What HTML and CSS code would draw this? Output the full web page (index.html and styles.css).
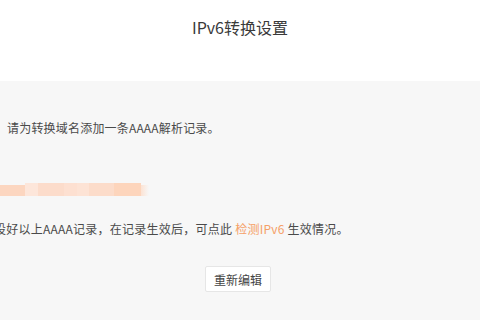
FILE: index.html
```html
<!DOCTYPE html>
<html lang="zh-CN">
<head>
<meta charset="utf-8">
<link rel="stylesheet" href="styles.css">
</head>
<body>
<header class="header">
  <h1 class="title">IPv6转换设置</h1>
</header>
<main class="panel">
  <p class="line first">请为转换域名添加一条AAAA解析记录。</p>
  <div class="mosaic">
    <span class="m m1"></span><span class="m m2"></span><span class="m m3"></span><span class="m m4"></span><span class="m m5"></span><span class="m m6"></span><span class="m m7"></span><span class="m m8"></span>
  </div>
  <p class="line third">设好以上AAAA记录，在记录生效后，可点此 <a class="link">检测IPv6</a> 生效情况。</p>
  <div class="actions">
    <button class="btn">重新编辑</button>
  </div>
</main>
</body>
</html>
```
FILE: styles.css
```css
html, body {
  margin: 0;
  padding: 0;
  width: 480px;
  height: 320px;
  overflow: hidden;
  font-family: "Noto Sans CJK SC", "Noto Sans", sans-serif;
}
.header {
  height: 81px;
  background: #ffffff;
  display: flex;
  justify-content: center;
  align-items: flex-start;
}
.title {
  margin: 15px 0 0 0;
  font-size: 16px;
  line-height: 24px;
  font-weight: normal;
  color: #3a3a3a;
}
.panel {
  background: #f7f7f7;
  height: 239px;
  padding: 0 0 0 7px;
  box-sizing: border-box;
  display: flex;
  flex-direction: column;
}
.line {
  margin: 0;
  font-size: 12px;
  line-height: 20px;
  color: #4a4a4a;
  white-space: nowrap;
  letter-spacing: 0.2px;
}
.first {
  margin-top: 37px;
}
.mosaic {
  margin-top: 45px;
  margin-left: -7px;
  display: flex;
  align-items: flex-end;
  height: 13px;
}
.m { display: block; height: 13px; }
.m1 { width: 25px; height: 11px; background: #fcd6c0; }
.m2 { width: 13px; background: #fde6da; }
.m3 { width: 26px; background: #fcdccb; }
.m4 { width: 13px; background: #fde0d1; }
.m5 { width: 12px; background: #fde3d5; }
.m6 { width: 25px; background: #fcdcca; }
.m7 { width: 27px; background: #fdd5bc; }
.m8 { width: 8px; height: 11px; background: linear-gradient(to right, #fce3d4, #f7f7f7); }
.third {
  margin-top: 23px;
  margin-left: -13px;
  letter-spacing: 0.25px;
}
.link {
  color: #f5a067;
  text-decoration: none;
}
.actions {
  margin-top: 27px;
  display: flex;
  justify-content: center;
  padding-right: 11px;
}
.btn {
  width: 66px;
  height: 26px;
  background: #ffffff;
  border: 1px solid #e6e6e6;
  border-radius: 2px;
  font-family: "Noto Sans CJK SC", sans-serif;
  font-size: 12px;
  color: #444;
  padding: 0;
}
```
